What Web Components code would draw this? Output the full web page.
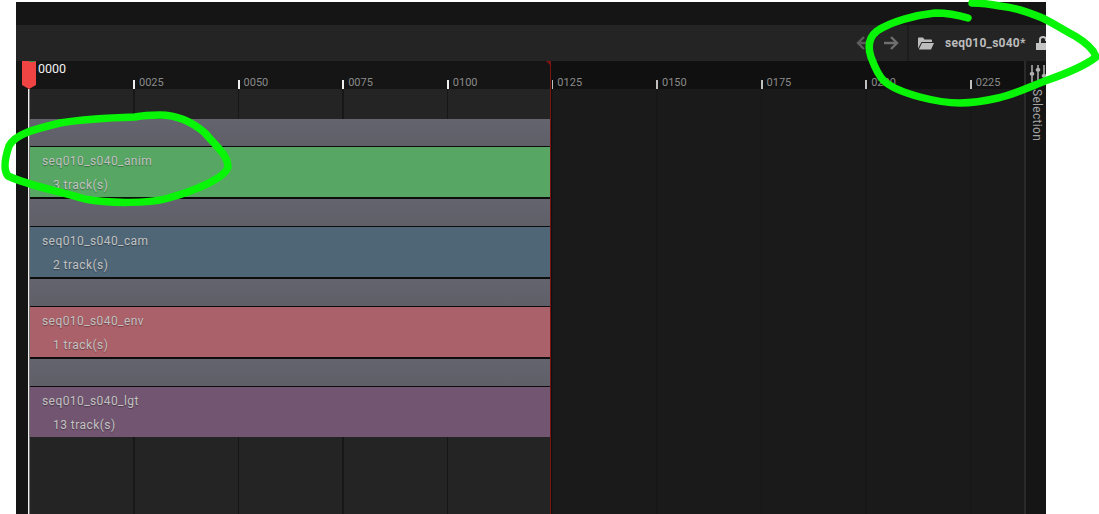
<!DOCTYPE html>
<html>
<head>
<meta charset="utf-8">
<title>Sequencer</title>
<style>
    html, body { margin: 0; height: 100%; background: #fff; overflow: hidden; }
    body { font-family: Roboto, "Liberation Sans", sans-serif; }
</style>
</head>
<body>
<seq-window>
    <seq-toolbar name="seq010_s040*"></seq-toolbar>
    <seq-timeline>
        <seq-track></seq-track>
        <seq-track name="seq010_s040_anim" count="3" color="#57a663"></seq-track>
        <seq-track></seq-track>
        <seq-track name="seq010_s040_cam" count="2" color="#4f6677"></seq-track>
        <seq-track></seq-track>
        <seq-track name="seq010_s040_env" count="1" color="#ab6169"></seq-track>
        <seq-track></seq-track>
        <seq-track name="seq010_s040_lgt" count="13" color="#725570"></seq-track>
    </seq-timeline>
</seq-window>

<script>
class SeqWindow extends HTMLElement {
    constructor() {
        super();
        this.attachShadow({ mode: 'open' });
        this.shadowRoot.innerHTML = `
            <style>
                :host {
                    display: flex;
                    flex-direction: column;
                    position: relative;
                    box-sizing: border-box;
                    width: 1030px;
                    height: 512px;
                    margin: 2px 0 0 16px;
                    background: #151515;
                }
                .top { height: 23px; flex: none; }
                .marks {
                    position: absolute;
                    left: -16px;
                    top: -2px;
                    width: 1099px;
                    height: 514px;
                    pointer-events: none;
                }
                .marks path { fill: none; stroke: #08f508; stroke-width: 7.5; stroke-linecap: round; stroke-linejoin: round; }
            </style>
            <div class="top"></div>
            <slot></slot>
            <!-- hand drawn annotations over the screenshot -->
            <svg class="marks" viewBox="0 0 1099 514">
                <path d="M135 117C100 118 78 120 60 123C35 129 15 134 9 146C5 158 3 170 8 176C30 186 55 190 85 199C110 204 150 203 165 199C195 191 225 178 228 167C228 155 215 145 205 133C190 120 175 115 160 115C150 115 140 116 135 117Z"/>
                <path d="M968 18C955 14 945 13 935 13C915 15 890 22 877 31C868 38 868 48 871 57C875 68 878 75 884 81C893 89 905 93 920 97C935 101 945 103 960 103C975 103 985 101 998 98C1015 94 1030 87 1045 81C1065 74 1085 66 1096 57C1094 50 1085 42 1075 36C1060 28 1050 21 1040 17C1025 11 1012 7 1000 6C990 4 980 3 972 3"/>
            </svg>
        `;
    }
}

class SeqToolbar extends HTMLElement {
    constructor() {
        super();
        this.attachShadow({ mode: 'open' });
        this.shadowRoot.innerHTML = `
            <style>
                :host {
                    display: flex;
                    flex: none;
                    align-items: center;
                    justify-content: flex-end;
                    height: 36px;
                    background: #242424;
                    overflow: hidden;
                }
                .nav { display: flex; align-items: center; gap: 11px; padding-right: 8px; height: 100%; border-right: 2px solid #1c1c1c; }
                .nav svg { display: block; }
                .crumb {
                    display: flex;
                    align-items: center;
                    width: 137px;
                    flex: none;
                    box-sizing: border-box;
                    padding-left: 9px;
                    color: #bcbcbc;
                    font-size: 12px;
                    font-weight: 700;
                    overflow: hidden;
                }
                .name { margin-left: 11px; white-space: nowrap; letter-spacing: .25px; }
                .lock { margin-left: 10px; flex: none; }
            </style>
            <div class="nav">
                <svg width="16" height="16" viewBox="0 0 16 16" fill="none" stroke="#5c5c5c" stroke-width="2.4"><path d="M15 8H2M8 2L2 8l6 6"/></svg>
                <svg width="16" height="16" viewBox="0 0 16 16" fill="none" stroke="#6e6e6e" stroke-width="2.4"><path d="M1 8h13M8 2l6 6-6 6"/></svg>
            </div>
            <div class="crumb">
                <svg width="16" height="13" viewBox="0 0 16 13" fill="#bcbcbc" style="flex:none"><path d="M0 1.5C0 .8.5.5 1 .5h4l1.5 2H13c.5 0 1 .4 1 1V5H3.5L0 11.5zM4 6h12l-3 6.5H.8z"/></svg>
                <span class="name"></span>
                <svg class="lock" width="14" height="14" viewBox="0 0 14 14"><path fill="#c4c4c4" d="M0 7h11v7H0z"/><path fill="none" stroke="#c4c4c4" stroke-width="2" d="M4 7V3.5a3 2.5 0 0 1 6 0V5"/></svg>
            </div>
        `;
        this.shadowRoot.querySelector('.name').textContent = this.getAttribute('name');
    }
}

class SeqTimeline extends HTMLElement {
    constructor() {
        super();
        this.attachShadow({ mode: 'open' });
        const labels = ['', '0025', '0050', '0075', '0100', '0125', '0150', '0175', '0200', '0225'];
        const cells = labels.map((label, i) => `
            <div class="cell${i > 4 ? ' out' : ''}">${i ? `<i></i><span>${label}</span>` : ''}</div>
        `).join('');
        this.shadowRoot.innerHTML = `
            <style>
                :host { display: flex; flex: 1; min-height: 0; position: relative; }
                .main { flex: 1; display: flex; flex-direction: column; min-width: 0; position: relative; overflow: hidden; }
                .ruler {
                    display: flex;
                    flex: none;
                    height: 28px;
                    padding-left: 13.4px;
                    background: linear-gradient(to right, #151515 534px, #101010 534px);
                }
                .cell {
                    flex: none;
                    width: 104.6px;
                    box-sizing: border-box;
                    display: flex;
                    align-items: flex-end;
                    gap: 4px;
                    color: #8a8a8a;
                    font-size: 11px;
                }
                .cell i { display: block; flex: none; width: 2px; height: 9px; margin-left: -1px; background: #f0f0f0; }
                .cell.out i { background: #c0c0c0; }
                .cell span { position: relative; line-height: 13px; }
                .area {
                    flex: 1;
                    margin-left: 14px;
                    background-color: #1a1a1a;
                    background-image: linear-gradient(to right, #242424 520px, transparent 520px);
                    position: relative;
                }
                .lines {
                    position: absolute;
                    inset: 0;
                    background-image: repeating-linear-gradient(to right, transparent 0, transparent 103px, #171717 103px, #171717 104.6px);
                }
                .tracks {
                    position: relative;
                    width: 520px;
                    margin-top: 30px;
                    background: #0d0d0d;
                }
                .playline { position: absolute; left: 12px; top: 28px; bottom: 0; width: 2px; background: linear-gradient(to right, #ededed 1px, #777 1px); }
                .end { position: absolute; left: 534px; top: 0; bottom: 0; width: 1px; background: #7d1414; box-shadow: 1px 0 0 #101010; }
                .end::before {
                    content: '';
                    position: absolute;
                    right: 0;
                    top: 0;
                    border-style: solid;
                    border-width: 5px 5px 0 0;
                    border-color: #7d1414 transparent transparent transparent;
                    transform: scaleX(-1);
                }
                .head {
                    position: absolute;
                    left: 6px;
                    top: 0;
                    width: 14px;
                    height: 28px;
                    background: #f04444;
                    clip-path: polygon(0 0, 100% 0, 100% 24px, 50% 28px, 0 24px);
                }
                .notch { position: absolute; left: 13px; top: 0; width: 6px; height: 1px; background: #3c8a44; }
                .frame { position: absolute; left: 22px; top: 1px; color: #f2f2f2; font-size: 12.5px; line-height: 14px; }
                .side {
                    flex: none;
                    width: 22px;
                    box-sizing: border-box;
                    border-left: 2px solid #2a2a2a;
                    background: #151515;
                    display: flex;
                    flex-direction: column;
                    align-items: flex-start;
                    color: #a4a4a4;
                    font-size: 12px;
                    overflow: hidden;
                }
                .side svg { flex: none; margin: 3px 0 0 3px; }
                .side span { writing-mode: vertical-rl; margin: 7px 0 0 4px; letter-spacing: .3px; }
            </style>
            <div class="main">
                <div class="ruler">${cells}</div>
                <div class="area">
                    <div class="lines"></div>
                    <div class="tracks"><slot></slot></div>
                </div>
                <div class="playline"></div>
                <div class="end"></div>
                <div class="head"></div>
                <div class="notch"></div>
                <div class="frame">0000</div>
            </div>
            <div class="side">
                <svg width="18" height="18" viewBox="0 0 18 18" fill="#b0b0b0">
                    <path d="M2.25 1h1.5v17h-1.5zM8.25 1h1.5v17h-1.5zM14.25 1h1.5v17h-1.5z"/>
                    <rect x="0.75" y="8" width="4.5" height="3.5" rx="1.5"/>
                    <rect x="6.75" y="4" width="4.5" height="3.5" rx="1.5"/>
                    <rect x="12.75" y="10" width="4.5" height="3.5" rx="1.5"/>
                </svg>
                <span>Selection</span>
            </div>
        `;
    }
}

class SeqTrack extends HTMLElement {
    constructor() {
        super();
        this.attachShadow({ mode: 'open' });
        const name = this.getAttribute('name');
        this.shadowRoot.innerHTML = `
            <style>
                :host {
                    display: block;
                    position: relative;
                    box-sizing: border-box;
                    color: #c2c2c2;
                    font-size: 12px;
                    line-height: 14px;
                    text-shadow: 0 1px 1px rgba(0, 0, 0, .35);
                }
                :host(:not([name])) {
                    height: 27px;
                    margin: 2px 0 1px;
                    background: linear-gradient(#64646f, #5f5f68);
                }
                :host([name]) {
                    height: 50px;
                    background: var(--clip, #555);
                    padding: 7px 0 0 12px;
                }
                :host([name])::after {
                    content: '';
                    position: absolute;
                    right: -2px;
                    top: 0;
                    bottom: 2px;
                    width: 2px;
                    background: #4a4a4a;
                }
                .name { letter-spacing: .42px; white-space: nowrap; }
                .count { margin: 10px 0 0 11px; letter-spacing: .45px; white-space: nowrap; }
            </style>
            ${name ? `<div class="name">${name}</div><div class="count">${this.getAttribute('count')} track(s)</div>` : ''}
        `;
        if (name) this.style.setProperty('--clip', this.getAttribute('color'));
    }
}

customElements.define('seq-window', SeqWindow);
customElements.define('seq-toolbar', SeqToolbar);
customElements.define('seq-timeline', SeqTimeline);
customElements.define('seq-track', SeqTrack);
</script>
</body>
</html>
